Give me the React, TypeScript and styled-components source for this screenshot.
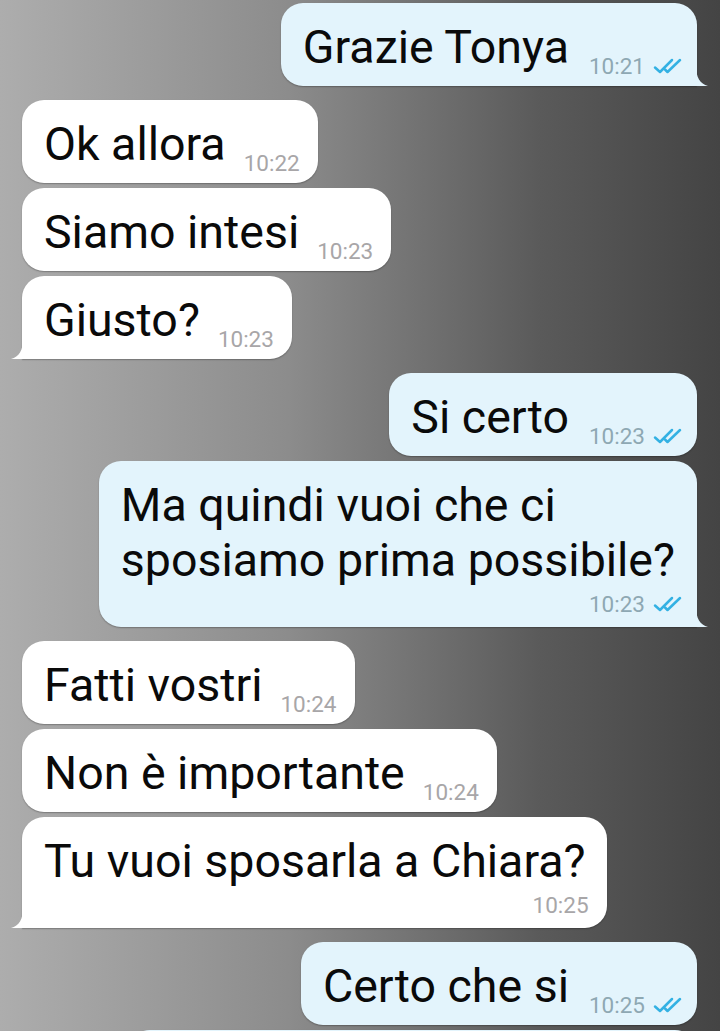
import styled, { createGlobalStyle } from "styled-components";

const GlobalStyle = createGlobalStyle`
  html, body {
    margin: 0;
    padding: 0;
  }
  body {
    font-family: Roboto, "Noto Sans", "Liberation Sans", sans-serif;
    overflow: hidden;
  }
`;

const Screen = styled.div`
  box-sizing: border-box;
  width: 720px;
  height: 1031px;
  overflow: hidden;
  padding: 3px 23px 0 22px;
  display: flex;
  flex-direction: column;
  gap: 14px;
  background: linear-gradient(to right, #adadad 0%, #8c8c8c 40%, #5a5a5a 75%, #444444 100%);
`;

const Group = styled.div<{ $out: boolean }>`
  display: flex;
  flex-direction: column;
  align-items: ${(p) => (p.$out ? "flex-end" : "flex-start")};
  gap: 5px;
`;

const Bubble = styled.div<{ $out: boolean; $tail: boolean; $stacked: boolean }>`
  position: relative;
  box-sizing: border-box;
  display: flex;
  flex-direction: ${(p) => (p.$stacked ? "column" : "row")};
  align-items: flex-end;
  padding: 17px ${(p) => (p.$out ? 11 : 18)}px 11px 22px;
  background: ${(p) => (p.$out ? "#e3f4fc" : "#ffffff")};
  border-radius: 22px;
  ${(p) =>
    p.$tail &&
    (p.$out ? "border-bottom-right-radius: 0;" : "border-bottom-left-radius: 0;")}
  box-shadow: 0 1px 1.5px rgba(0, 0, 0, 0.28);
`;

const Tail = styled.svg<{ $out: boolean }>`
  position: absolute;
  bottom: 0;
  ${(p) => (p.$out ? "right: -11px;" : "left: -11px; transform: scaleX(-1);")}
  width: 12px;
  height: 20px;
  fill: ${(p) => (p.$out ? "#e3f4fc" : "#ffffff")};
`;

const Text = styled.div<{ $out: boolean; $stacked: boolean }>`
  font-size: 46.5px;
  line-height: 55px;
  color: #0a0a0a;
  white-space: nowrap;
  align-self: flex-start;
  margin-right: ${(p) => (p.$stacked ? (p.$out ? 11 : 3) : 0)}px;
`;

const Meta = styled.div<{ $out: boolean; $stacked: boolean }>`
  display: flex;
  align-items: center;
  gap: 7px;
  height: 24px;
  margin-left: ${(p) => (p.$stacked ? 0 : p.$out ? 20 : 18)}px;
  margin-top: ${(p) => (p.$stacked ? 4 : 0)}px;
  margin-bottom: ${(p) => (p.$stacked ? 0 : -3)}px;
`;

const Time = styled.span<{ $out: boolean }>`
  font-size: 22.5px;
  line-height: 24px;
  color: ${(p) => (p.$out ? "#8ea8b3" : "#a8a6a8")};
`;

const Ticks = styled.svg`
  width: 34px;
  height: 16px;
  stroke: #33b1e3;
  stroke-width: 2.5;
  fill: none;
  stroke-linecap: round;
  stroke-linejoin: round;
`;

type Msg = { lines: string[]; time: string; stacked?: boolean };
type Block = { out: boolean; msgs: Msg[] };

const chat: Block[] = [
  { out: true, msgs: [{ lines: ["Grazie Tonya"], time: "10:21" }] },
  {
    out: false,
    msgs: [
      { lines: ["Ok allora"], time: "10:22" },
      { lines: ["Siamo intesi"], time: "10:23" },
      { lines: ["Giusto?"], time: "10:23" },
    ],
  },
  {
    out: true,
    msgs: [
      { lines: ["Si certo"], time: "10:23" },
      {
        lines: ["Ma quindi vuoi che ci", "sposiamo prima possibile?"],
        time: "10:23",
        stacked: true,
      },
    ],
  },
  {
    out: false,
    msgs: [
      { lines: ["Fatti vostri"], time: "10:24" },
      { lines: ["Non è importante"], time: "10:24" },
      { lines: ["Tu vuoi sposarla a Chiara?"], time: "10:25", stacked: true },
    ],
  },
  {
    out: true,
    msgs: [
      { lines: ["Certo che si"], time: "10:25" },
      { lines: ["Ne parliamo domani"], time: "10:26" },
    ],
  },
];

function DoubleTick() {
  return (
    <Ticks viewBox="0 0 34 16">
      <path d="M3 9.5 L8 14 L20 2" />
      <path d="M13 11.5 L15.5 14 L28 2" />
    </Ticks>
  );
}

function Message({ msg, out, tail }: { msg: Msg; out: boolean; tail: boolean }) {
  const stacked = !!msg.stacked;
  return (
    <Bubble $out={out} $tail={tail} $stacked={stacked}>
      <Text $out={out} $stacked={stacked}>
        {msg.lines.map((l, i) => (
          <div key={i}>{l}</div>
        ))}
      </Text>
      <Meta $out={out} $stacked={stacked}>
        <Time $out={out}>{msg.time}</Time>
        {out && <DoubleTick />}
      </Meta>
      {tail && (
        <Tail $out={out} viewBox="0 0 12 20">
          <path d="M0 0 C0 11 4 18 12 20 L0 20 Z" />
        </Tail>
      )}
    </Bubble>
  );
}

export default function App() {
  return (
    <>
      <GlobalStyle />
      <Screen>
        {chat.map((block, bi) => (
          <Group key={bi} $out={block.out}>
            {block.msgs.map((m, mi) => (
              <Message
                key={mi}
                msg={m}
                out={block.out}
                tail={mi === block.msgs.length - 1}
              />
            ))}
          </Group>
        ))}
      </Screen>
    </>
  );
}
